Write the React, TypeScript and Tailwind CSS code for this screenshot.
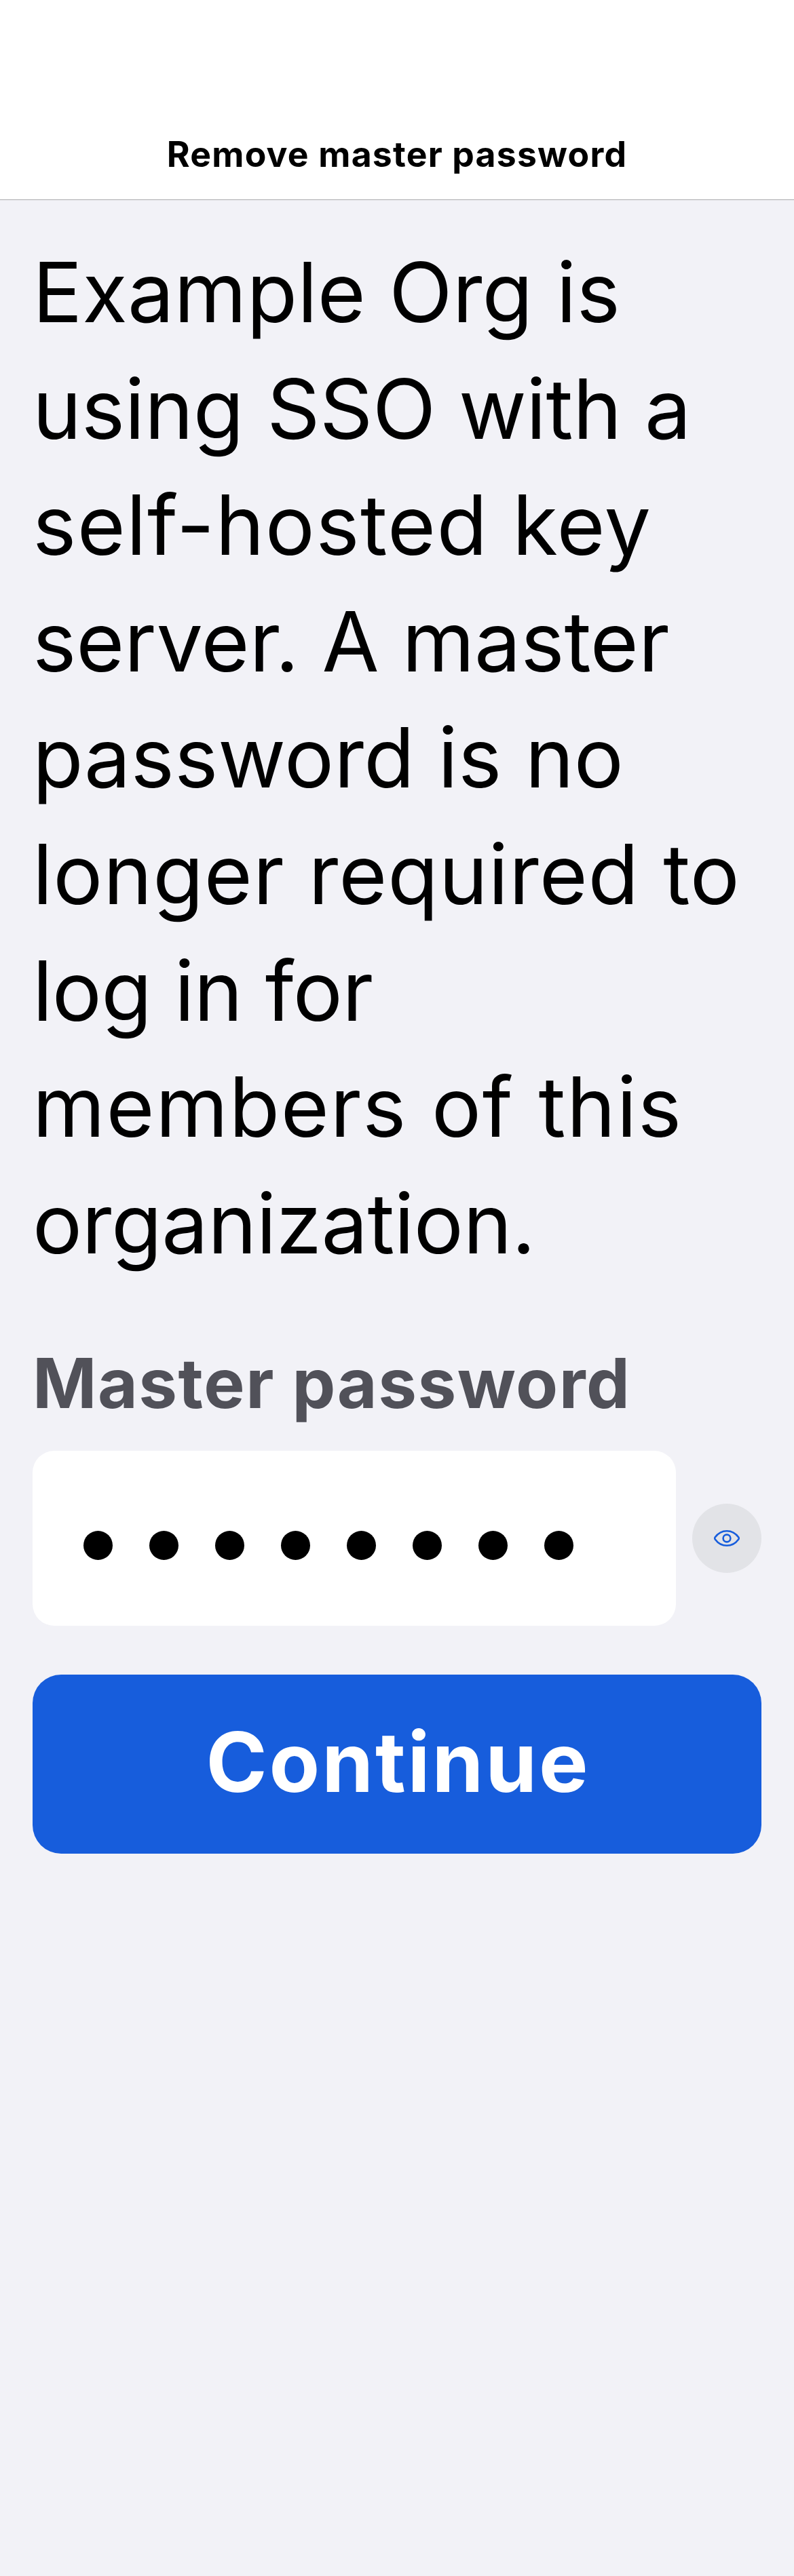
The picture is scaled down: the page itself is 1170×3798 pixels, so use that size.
import React from "react";

const messageLines = [
  { text: "Example Org is", tracking: "tracking-[0.1px]" },
  { text: "using SSO with a", tracking: "tracking-[-0.3px]" },
  { text: "self-hosted key", tracking: "tracking-[1.35px]" },
  { text: "server. A master", tracking: "tracking-[-0.2px]" },
  { text: "password is no", tracking: "tracking-[0.1px]" },
  { text: "longer required to", tracking: "tracking-[0.85px]" },
  { text: "log in for", tracking: "tracking-[-0.66px]" },
  { text: "members of this", tracking: "tracking-[1.65px]" },
  { text: "organization.", tracking: "tracking-[-0.5px]" },
];

function NavigationBar() {
  return (
    <header className="h-[295px] border-b border-[#a9a9ac] bg-white pt-[196px] text-center">
      <h1 className="text-[51.7px] leading-[62px] font-bold tracking-[1.2px] text-black">
        Remove master password
      </h1>
    </header>
  );
}

function EyeIcon() {
  return (
    <svg
      className="h-6 w-[38px]"
      viewBox="0 0 38 24"
      fill="none"
      stroke="#175ddc"
      strokeWidth="2.6"
      strokeLinejoin="round"
    >
      <path d="M1.7 10.6C5.8 5 12 1.3 19 1.3S32.2 5 36.3 10.6Q37.3 12 36.3 13.4C32.2 19 26 22.7 19 22.7S5.8 19 1.7 13.4Q0.7 12 1.7 10.6Z" />
      <circle cx="19" cy="12" r="5.4" />
    </svg>
  );
}

function PasswordField() {
  return (
    <div className="mt-[34px] flex items-center gap-6">
      <div
        role="textbox"
        aria-label="Master password"
        className="flex h-[258px] w-[948px] items-center gap-[54px] rounded-[32px] bg-white pt-[21px] pl-[75px]"
      >
        {Array.from({ length: 8 }, (_, i) => (
          <span key={i} className="size-[43px] rounded-full bg-black" />
        ))}
      </div>
      <button
        type="button"
        aria-label="Show password"
        className="flex size-[102px] items-center justify-center rounded-full bg-[#e2e3e7]"
      >
        <EyeIcon />
      </button>
    </div>
  );
}

export default function App() {
  return (
    <div className="min-h-screen bg-[#f2f2f7] font-['Inter',sans-serif]">
      <NavigationBar />
      <main className="px-12 pt-[50px]">
        <p className="text-[121.9px] leading-[171.6px] whitespace-nowrap text-black">
          {messageLines.map((line) => (
            <span key={line.text} className={`block ${line.tracking}`}>
              {line.text}
            </span>
          ))}
        </p>
        <h2 className="mt-[84px] text-[101.4px] leading-[132px] font-bold tracking-[1.5px] whitespace-nowrap text-[#515159]">
          Master password
        </h2>
        <PasswordField />
        <button
          type="button"
          className="mt-[72px] flex h-[264px] w-full items-center justify-center rounded-[42px] bg-[#175ddc] pb-[5px] pl-[3px] text-[121.9px] font-bold tracking-[2.9px] text-white"
        >
          Continue
        </button>
      </main>
    </div>
  );
}
